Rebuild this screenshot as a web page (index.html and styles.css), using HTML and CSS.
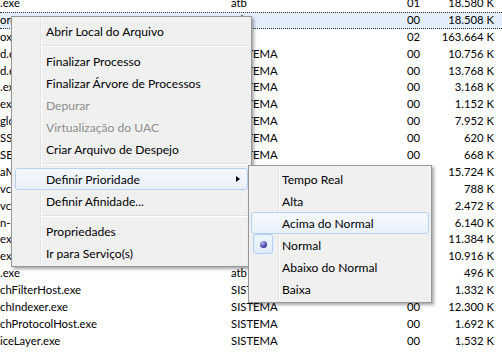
FILE: index.html
```html
<!DOCTYPE html>
<html lang="pt-BR">
<head>
<meta charset="utf-8">
<title>Gerenciador de Tarefas</title>
<link rel="stylesheet" href="styles.css">
</head>
<body>
<div class="table">
  <div class="row"><span class="c-name">.exe</span><span class="c-user">atb</span><span class="c-cpu">01</span><span class="c-mem">18.580 K</span></div>
  <div class="row sel"><span class="c-name">ore.exe</span><span class="c-user">atb</span><span class="c-cpu">00</span><span class="c-mem">18.508 K</span></div>
  <div class="row"><span class="c-name">ox.exe</span><span class="c-user">atb</span><span class="c-cpu">02</span><span class="c-mem">163.664 K</span></div>
  <div class="row"><span class="c-name">d.exe</span><span class="c-user">SISTEMA</span><span class="c-cpu">00</span><span class="c-mem">10.756 K</span></div>
  <div class="row"><span class="c-name">d.exe</span><span class="c-user">SISTEMA</span><span class="c-cpu">00</span><span class="c-mem">13.768 K</span></div>
  <div class="row"><span class="c-name">.exe</span><span class="c-user">SISTEMA</span><span class="c-cpu">00</span><span class="c-mem">3.168 K</span></div>
  <div class="row"><span class="c-name">exe</span><span class="c-user">SISTEMA</span><span class="c-cpu">00</span><span class="c-mem">1.152 K</span></div>
  <div class="row"><span class="c-name">gldr.exe</span><span class="c-user">SISTEMA</span><span class="c-cpu">00</span><span class="c-mem">7.952 K</span></div>
  <div class="row"><span class="c-name">SS.exe</span><span class="c-user">SISTEMA</span><span class="c-cpu">00</span><span class="c-mem">620 K</span></div>
  <div class="row"><span class="c-name">SBService.exe</span><span class="c-user">SISTEMA</span><span class="c-cpu">00</span><span class="c-mem">668 K</span></div>
  <div class="row"><span class="c-name">aMgr.exe</span><span class="c-user">atb</span><span class="c-cpu">00</span><span class="c-mem">15.724 K</span></div>
  <div class="row"><span class="c-name">vchost.exe</span><span class="c-user">SISTEMA</span><span class="c-cpu">00</span><span class="c-mem">788 K</span></div>
  <div class="row"><span class="c-name">vchost.exe</span><span class="c-user">SISTEMA</span><span class="c-cpu">00</span><span class="c-mem">2.472 K</span></div>
  <div class="row"><span class="c-name">n-svc.exe</span><span class="c-user">SISTEMA</span><span class="c-cpu">00</span><span class="c-mem">6.140 K</span></div>
  <div class="row"><span class="c-name">exe</span><span class="c-user">SISTEMA</span><span class="c-cpu">00</span><span class="c-mem">11.384 K</span></div>
  <div class="row"><span class="c-name">exe</span><span class="c-user">SISTEMA</span><span class="c-cpu">00</span><span class="c-mem">10.916 K</span></div>
  <div class="row"><span class="c-name">.exe</span><span class="c-user">atb</span><span class="c-cpu">00</span><span class="c-mem">496 K</span></div>
  <div class="row"><span class="c-name">chFilterHost.exe</span><span class="c-user">SISTEMA</span><span class="c-cpu">00</span><span class="c-mem">1.332 K</span></div>
  <div class="row"><span class="c-name">chIndexer.exe</span><span class="c-user">SISTEMA</span><span class="c-cpu">00</span><span class="c-mem">12.300 K</span></div>
  <div class="row"><span class="c-name">chProtocolHost.exe</span><span class="c-user">SISTEMA</span><span class="c-cpu">00</span><span class="c-mem">1.692 K</span></div>
  <div class="row"><span class="c-name">iceLayer.exe</span><span class="c-user">SISTEMA</span><span class="c-cpu">00</span><span class="c-mem">1.532 K</span></div>
</div>

<div class="menu menu-main">
  <div class="item">Abrir Local do Arquivo</div>
  <div class="sep"></div>
  <div class="item">Finalizar Processo</div>
  <div class="item">Finalizar Árvore de Processos</div>
  <div class="item disabled">Depurar</div>
  <div class="item disabled">Virtualização do UAC</div>
  <div class="item">Criar Arquivo de Despejo</div>
  <div class="sep"></div>
  <div class="item hot">Definir Prioridade<span class="arrow"></span></div>
  <div class="item">Definir Afinidade...</div>
  <div class="sep"></div>
  <div class="item">Propriedades</div>
  <div class="item">Ir para Serviço(s)</div>
</div>

<div class="menu menu-sub">
  <div class="item">Tempo Real</div>
  <div class="item">Alta</div>
  <div class="item hot">Acima do Normal</div>
  <div class="item checked"><span class="radio"><span class="dot"></span></span>Normal</div>
  <div class="item">Abaixo do Normal</div>
  <div class="item">Baixa</div>
</div>
</body>
</html>
```

FILE: styles.css
```css
html, body {
  margin: 0;
  padding: 0;
  width: 502px;
  height: 352px;
  overflow: hidden;
  background: #ffffff;
  font-family: Lato, "Open Sans", "Liberation Sans", sans-serif;
  font-size: 11.3px;
  color: #000000;
}

.table {
  margin-top: -5px;
}

.row {
  display: flex;
  height: 16.9px;
  line-height: 16.9px;
  white-space: nowrap;
  box-sizing: border-box;
}

.row.sel {
  background: #e4eefb;
  border-top: 1px dotted #333333;
  border-bottom: 1px dotted #333333;
  line-height: 14.9px;
}

.c-name {
  width: 231px;
  overflow: hidden;
}

.c-user {
  width: 176px;
  overflow: hidden;
}

.c-cpu {
  width: 30px;
}

.c-mem {
  width: 57px;
  text-align: right;
}

/* context menus */
.menu {
  position: absolute;
  box-sizing: border-box;
  background: #f0f0f0;
  border: 1px solid #979797;
  box-shadow: 2px 2px 3px rgba(0, 0, 0, 0.35);
  font-size: 12.1px;
}

.menu::before {
  content: "";
  position: absolute;
  top: 2px;
  bottom: 2px;
  width: 1px;
  background: #e2e3e3;
  border-right: 1px solid #ffffff;
}

.menu-main {
  left: 11px;
  top: 16px;
  width: 241px;
  padding: 3px 3px 2px 3px;
}

.menu-main::before {
  left: 28px;
}

.menu-sub {
  left: 248px;
  top: 165px;
  width: 184px;
  padding: 2px 2px 2px 2px;
}

.menu-sub::before {
  left: 29px;
}

.item {
  position: relative;
  height: 22px;
  line-height: 21px;
  padding-left: 30px;
  box-sizing: border-box;
  border: 1px solid transparent;
  border-radius: 3px;
  white-space: nowrap;
}

.menu-sub .item {
  padding-left: 30px;
}

.item.disabled {
  color: #8d8d8d;
}

.item.hot {
  border-color: #b6d1f2;
  background: linear-gradient(#f6f9fe, #e8f0fb);
}

.sep {
  height: 8px;
  margin-left: 27px;
  position: relative;
}

.sep::after {
  content: "";
  position: absolute;
  left: 0;
  right: 0;
  top: 3px;
  height: 1px;
  background: #e0e0e0;
  border-bottom: 1px solid #ffffff;
}

.arrow {
  position: absolute;
  right: 7px;
  top: 7px;
  width: 0;
  height: 0;
  border-top: 3.5px solid transparent;
  border-bottom: 3.5px solid transparent;
  border-left: 4px solid #000000;
}

.radio {
  position: absolute;
  left: 1px;
  top: -1px;
  width: 20px;
  height: 20px;
  box-sizing: border-box;
  border: 1px solid #aecff7;
  border-radius: 3px;
  background: linear-gradient(#eef5fd, #e0ecfa);
  display: flex;
  align-items: center;
  justify-content: center;
}

.dot {
  width: 7px;
  height: 7px;
  border-radius: 50%;
  background: radial-gradient(circle at 35% 30%, #b9bdf0 0, #4a4fb0 55%, #262a7a 100%);
}
```
